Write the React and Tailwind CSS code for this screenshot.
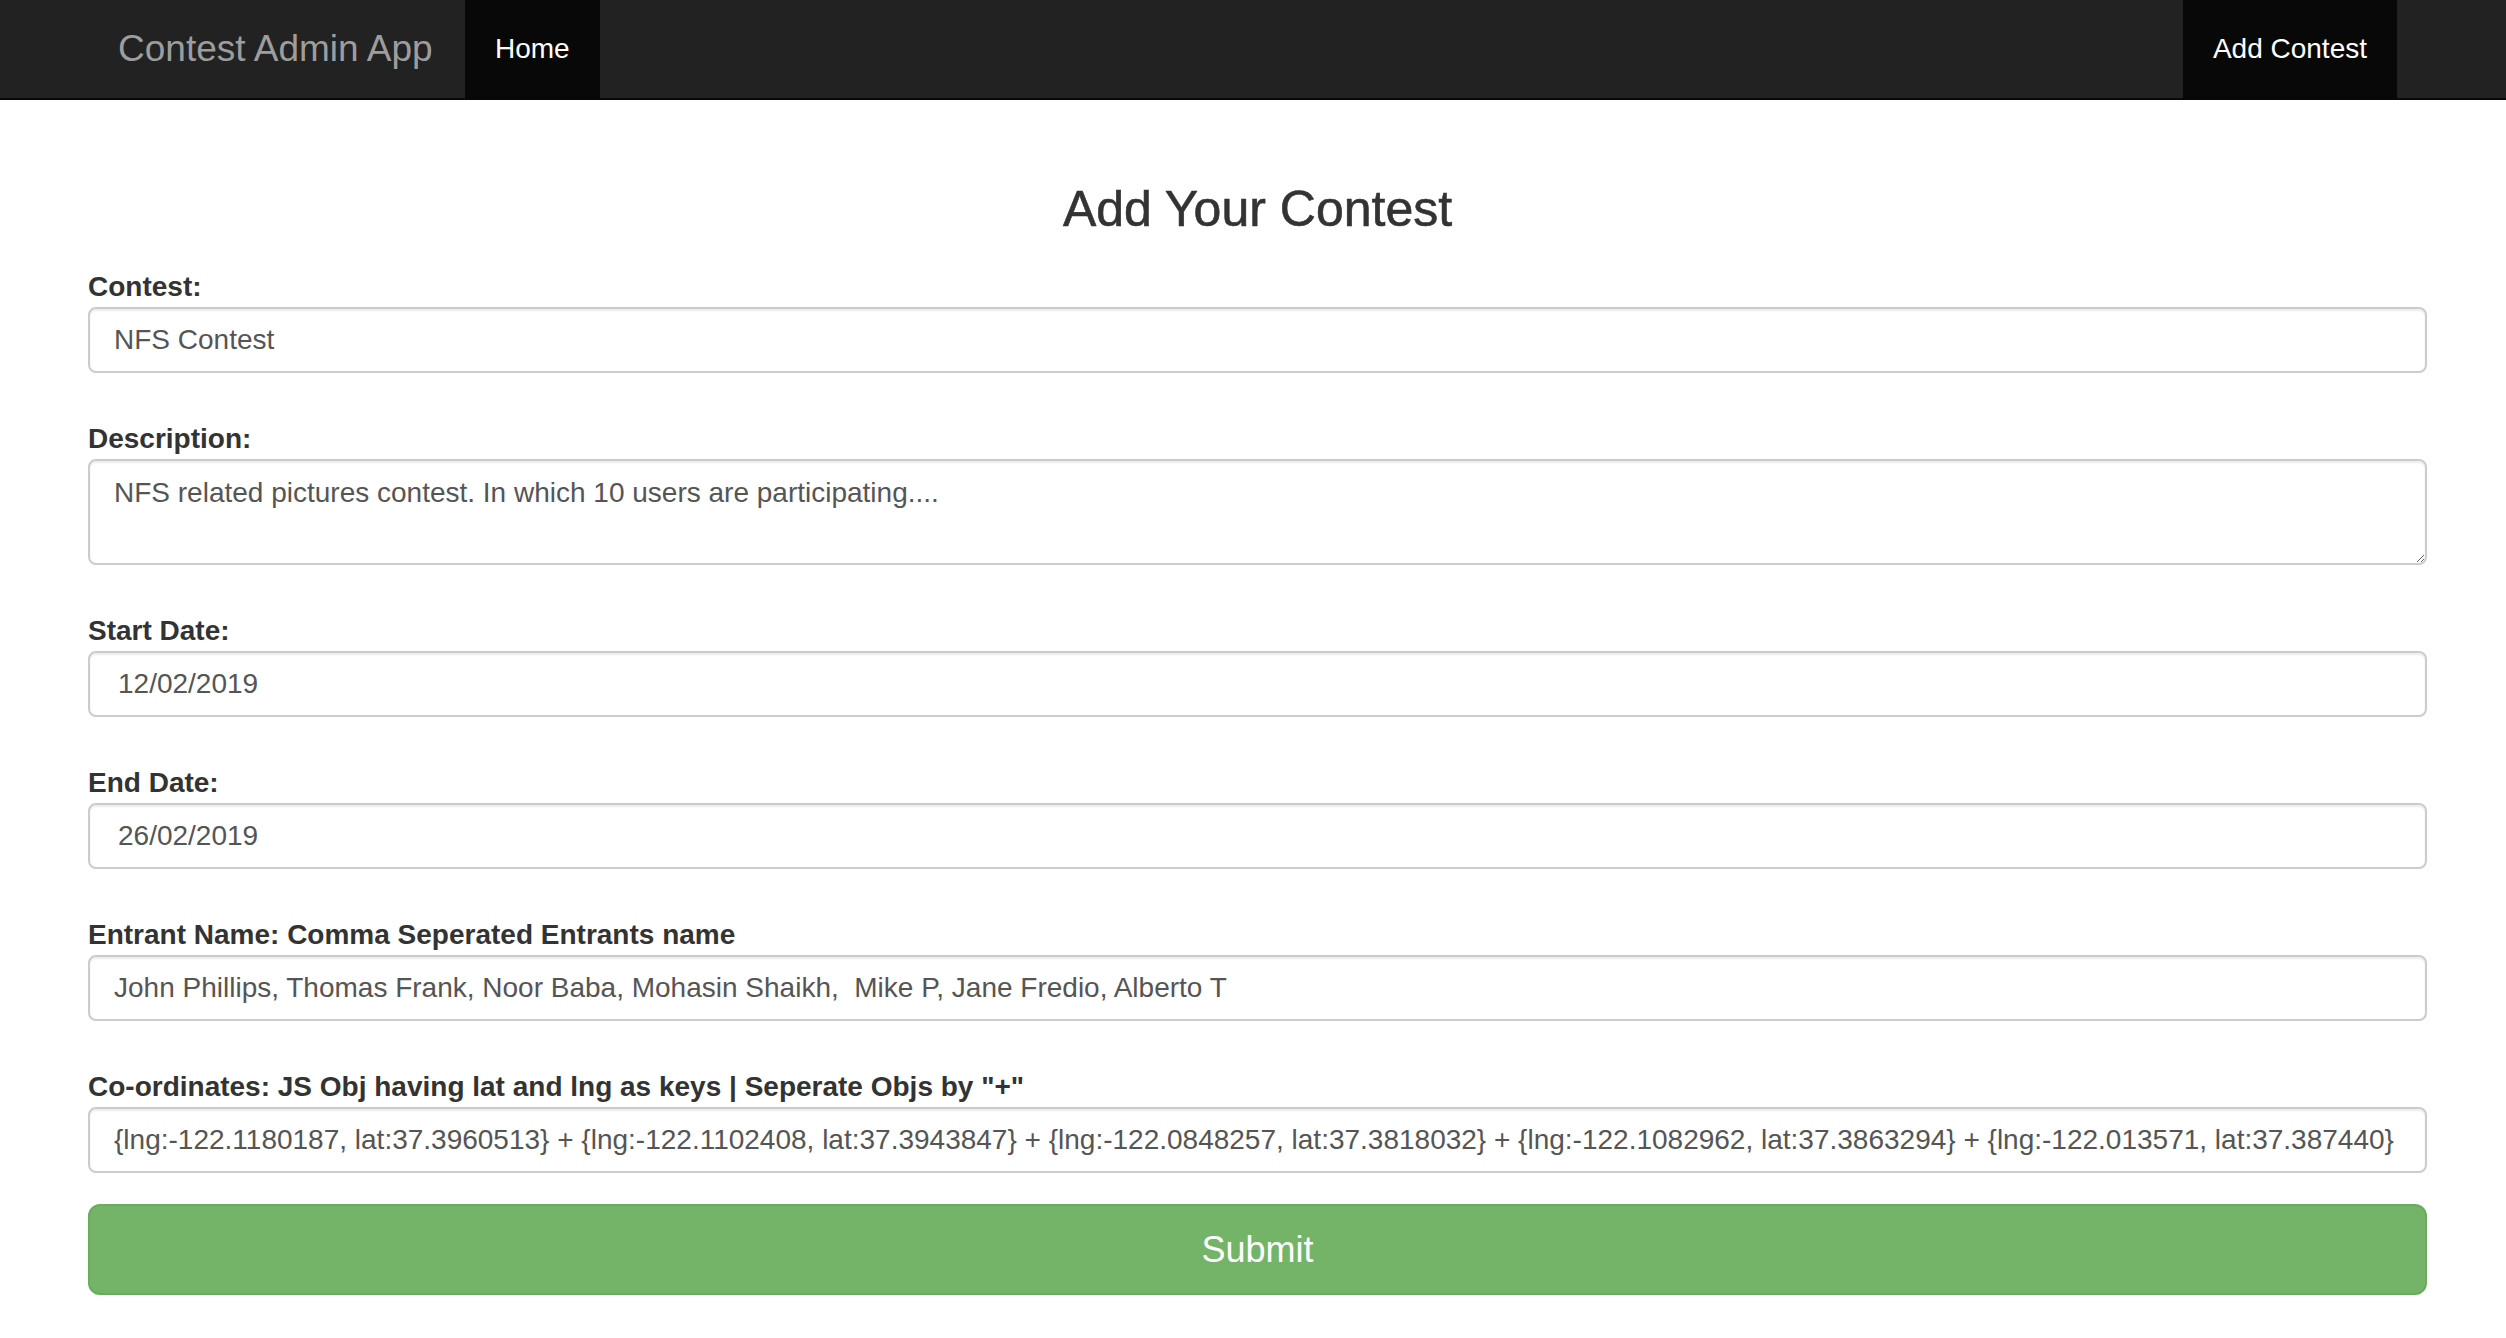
import { useState } from 'react'

const FIELDS = [
  { id: 'contest', label: 'Contest:', value: 'NFS Contest' },
  { id: 'description', label: 'Description:', value: 'NFS related pictures contest. In which 10 users are participating....', multiline: true },
  { id: 'start', label: 'Start Date:', value: '12/02/2019', date: true },
  { id: 'end', label: 'End Date:', value: '26/02/2019', date: true },
  { id: 'entrants', label: 'Entrant Name: Comma Seperated Entrants name', value: 'John Phillips, Thomas Frank, Noor Baba, Mohasin Shaikh,  Mike P, Jane Fredio, Alberto T' },
  {
    id: 'coords',
    label: 'Co-ordinates: JS Obj having lat and lng as keys | Seperate Objs by "+"',
    value: '{lng:-122.1180187, lat:37.3960513} + {lng:-122.1102408, lat:37.3943847} + {lng:-122.0848257, lat:37.3818032} + {lng:-122.1082962, lat:37.3863294} + {lng:-122.013571, lat:37.387440} + {lng:-122.0500062, lat:37.3891254}',
  },
]

const inputCls =
  'block w-full border-2 border-[#ccc] rounded-[8px] bg-white text-[28px] text-[#555] shadow-[inset_0_2px_2px_rgba(0,0,0,0.075)] outline-none focus:border-[#66afe9]'

function Field({ field, value, onChange }) {
  return (
    <div>
      <label htmlFor={field.id} className="block pt-[2px] text-[28px] leading-[40px] font-bold text-[#333]">
        {field.label}
      </label>
      {field.multiline ? (
        <textarea
          id={field.id}
          value={value}
          onChange={(e) => onChange(e.target.value)}
          className={`${inputCls} h-[106px] px-[24px] py-[12px] leading-[40px] resize-y`}
        />
      ) : (
        <input
          id={field.id}
          type="text"
          value={value}
          onChange={(e) => onChange(e.target.value)}
          className={`${inputCls} h-[66px] ${field.date ? 'pl-[28px] pr-[24px]' : 'px-[24px]'}`}
        />
      )}
    </div>
  )
}

export default function App() {
  const [values, setValues] = useState(() => Object.fromEntries(FIELDS.map((f) => [f.id, f.value])))

  return (
    <div className="min-h-screen bg-white font-['Liberation_Sans',Arial,sans-serif] text-[#333]">
      <nav className="h-[100px] bg-[#222] border-b-2 border-[#080808]">
        <div className="ml-[88px] w-[2339px] h-full flex">
          <a href="#" className="w-[377px] pl-[30px] flex items-center text-[37px] text-[#9d9d9d]">
            Contest Admin App
          </a>
          <a href="#" className="px-[30px] flex items-center bg-[#080808] text-white text-[28px]">
            Home
          </a>
          <div className="flex-1" />
          <a href="#" className="mr-[30px] px-[30px] flex items-center bg-[#080808] text-white text-[28px]">
            Add Contest
          </a>
        </div>
      </nav>

      <main className="ml-[88px] w-[2339px] pt-[83px]">
        <h3 className="text-center text-[50px] leading-[53px] font-medium text-[#333] [-webkit-text-stroke:0.6px_#333] mb-[29px]">
          Add Your Contest
        </h3>

        <form onSubmit={(e) => e.preventDefault()}>
          <div className="flex flex-col gap-[44px]">
            {FIELDS.map((f) => (
              <Field
                key={f.id}
                field={f}
                value={values[f.id]}
                onChange={(v) => setValues((s) => ({ ...s, [f.id]: v }))}
              />
            ))}
          </div>

          <button
            type="submit"
            className="mt-[31px] block w-full h-[91px] rounded-[12px] border-2 border-[#68ad5c] bg-[#74b468] text-white text-[36px]"
          >
            Submit
          </button>
        </form>
      </main>
    </div>
  )
}
